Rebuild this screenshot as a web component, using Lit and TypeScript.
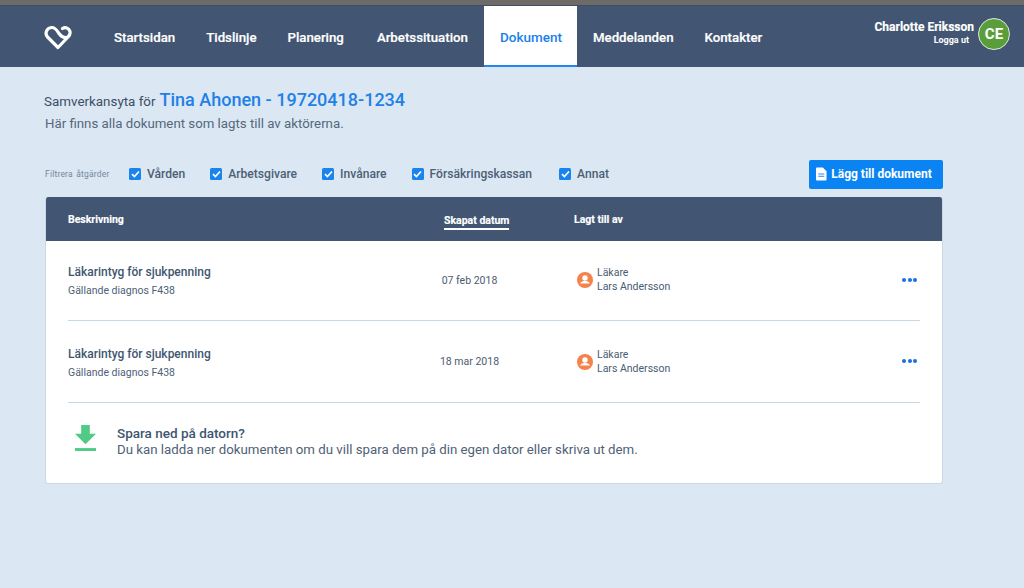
import { LitElement, html, css, svg } from "lit";
import { customElement } from "lit/decorators.js";

const NAV = ["Startsidan", "Tidslinje", "Planering", "Arbetssituation", "Dokument", "Meddelanden", "Kontakter"];
const FILTERS = ["Vården", "Arbetsgivare", "Invånare", "Försäkringskassan", "Annat"];
const ROWS = [
  { title: "Läkarintyg för sjukpenning", sub: "Gällande diagnos F438", date: "07 feb 2018" },
  { title: "Läkarintyg för sjukpenning", sub: "Gällande diagnos F438", date: "18 mar 2018" },
];

@customElement("app-root")
export class AppRoot extends LitElement {
  static styles = css`
    :host { display: block; width: 1024px; height: 588px; overflow: hidden; background: #dbe7f3; font-family: Roboto, "Liberation Sans", sans-serif; color: #41566f; }
    .strip { height: 5px; background: #6d6a68; border-bottom: 1px solid #3d4f68; }
    nav { height: 61px; background: #425673; display: flex; align-items: stretch; padding: 0 14px 0 44px; }
    .logo { width: 28px; margin-right: 26.500px; align-self: center; display: flex; margin-top: 2px; }
    .links { display: flex; align-items: stretch; }
    .links a { padding: 1px 15.500px 0; display: flex; align-items: center; color: #fff; font-size: 13.250px; font-weight: 500; box-sizing: border-box; -webkit-text-stroke: 0.2px #fff; }
    .links a:nth-child(4) { margin-left: 2px; }
    .links a.on { background: #fff; color: #1a80e8; border-bottom: 2px solid #2287ee; padding: 3px 0 0; margin-left: 1px; -webkit-text-stroke: 0; width: 93px; justify-content: center; font-size: 13.500px; }
    .user { margin-left: auto; display: flex; align-items: center; gap: 4px; margin-top: -5px; }
    .who { text-align: right; color: #fff; font-weight: 700; }
    .who b { display: block; font-size: 12px; line-height: 13px; font-weight: 700; -webkit-text-stroke: 0.15px #fff; }
    .who span { display: block; font-size: 9px; line-height: 13px; margin-right: 5px; }
    .avatar { width: 32px; height: 32px; box-sizing: border-box; border-radius: 50%; background: #5a9e3a; border: 1px solid #dfe8e0; display: flex; align-items: center; justify-content: center; color: #fff; font-size: 15px; font-weight: 700; }
    main { padding: 0 81px 0 45px; }
    .head { padding-top: 22px; }
    .l1 { font-size: 13.400px; line-height: 22px; color: #3c4f66; display: flex; align-items: baseline; gap: 4px; margin-left: -1px; }
    .l1 strong { font-size: 18px; font-weight: 500; color: #1f80e6; }
    .l2 { font-size: 13.250px; line-height: 18px; color: #55677c; margin-top: 2px; }
    .bar { display: flex; align-items: center; margin-top: 27px; height: 29px; }
    .bar small { font-size: 8.500px; color: #75879a; width: 84px; letter-spacing: 0.2px; word-spacing: 1px; margin-top: -1px; }
    .f { display: flex; align-items: center; gap: 6px; font-size: 12.100px; font-weight: 500; color: #4c5f76; margin-right: 25px; margin-top: -2px; }
    .f:nth-of-type(4) { margin-right: 27px; }
    .f i { width: 12px; height: 12px; border-radius: 1.500px; background: #1a84ee; display: flex; align-items: center; justify-content: center; }
    .btn { margin-left: auto; height: 29px; width: 134px; border-radius: 2px; background: #0a84f2; color: #fff; font-size: 12px; font-weight: 700; display: flex; align-items: center; justify-content: center; gap: 4px; box-sizing: border-box; padding: 0 4px 2px 0; }
    .card { margin-top: 8px; background: #fff; border-radius: 3px; border: 1px solid #c9d8e6; border-top: 0; overflow: hidden; height: 287px; box-sizing: border-box; }
    .thead { height: 44px; margin: 0 -1px; background: #425673; color: #fff; font-size: 10.500px; font-weight: 700; display: grid; grid-template-columns: 376px 130px 1fr; align-items: center; padding-left: 23px; -webkit-text-stroke: 0.15px #fff; }
    .thead span.sort { justify-self: start; border-bottom: 2px solid #fff; line-height: 15px; padding-top: 2px; margin-top: 2px; }
    .rows { padding: 0 22px; }
    .row { height: 78px; border-bottom: 1px solid #c5d8e6; display: grid; grid-template-columns: 361px 148px 1fr 20px; align-items: center; padding-bottom: 1px; }
    .row + .row { height: 81px; padding-bottom: 0; }
    .row + .row .p { margin-top: 1px; }
    .desc { margin-top: 2px; }
    .t { font-size: 12px; font-weight: 500; line-height: 16px; color: #41566f; }
    .s { font-size: 10.500px; line-height: 14px; margin-top: 4px; color: #4d6076; }
    .d { font-size: 10.500px; text-align: center; color: #4a5c72; width: 61px; margin-left: 10px; white-space: nowrap; }
    .p { display: flex; align-items: center; gap: 4px; font-size: 10.500px; line-height: 14px; color: #4a5c72; margin-top: -1px; }
    .dots { display: flex; gap: 1.500px; justify-self: end; margin-right: 3px; margin-top: -1px; }
    .dots b { width: 4px; height: 4px; border-radius: 50%; background: #1b6fe0; }
    .save { display: flex; align-items: center; padding: 22px 0 0 28px; }
    .save svg { margin: 0 20px 6px 0; }
    .save h4 { margin: 0 0 2px; font-size: 13.500px; font-weight: 500; line-height: 14px; color: #3e5570; }
    .save p { margin: 0; font-size: 13.250px; line-height: 16px; color: #4f6176; }
  `;

  render() {
    const chk = svg`<svg width="9" height="8" viewBox="0 0 9 8"><path d="M1 4.200 3.400 6.500 8 1.500" fill="none" stroke="#fff" stroke-width="1.700"/></svg>`;
    return html`
      <div class="strip"></div>
      <nav>
        <div class="logo">
          <svg width="28" height="25" viewBox="0 0 28 25"><path d="M18.500 3.500C21 1.800 25 2.800 26 6.500 26.600 9 25 11 24 12L14 22.500 3.500 12C.8 9 2 3 7.500 2.500 11.500 2.200 13 5.500 15 8.500 17 11.500 20.500 13.500 24 12" fill="none" stroke="#fff" stroke-width="3.200" stroke-linejoin="round" stroke-linecap="round"/></svg>
        </div>
        <div class="links">
          ${NAV.map((n) => html`<a class=${n === "Dokument" ? "on" : ""}>${n}</a>`)}
        </div>
        <div class="user">
          <div class="who"><b>Charlotte Eriksson</b><span>Logga ut</span></div>
          <div class="avatar">CE</div>
        </div>
      </nav>
      <main>
        <div class="head">
          <div class="l1">Samverkansyta för <strong>Tina Ahonen - 19720418-1234</strong></div>
          <div class="l2">Här finns alla dokument som lagts till av aktörerna.</div>
        </div>
        <div class="bar">
          <small>Filtrera åtgärder</small>
          ${FILTERS.map((f) => html`<label class="f"><i>${chk}</i>${f}</label>`)}
          <div class="btn">
            <svg width="11" height="14" viewBox="0 0 12 14"><path d="M1 0h6.500L11.500 4v9a1 1 0 0 1-1 1H1a1 1 0 0 1-1-1V1a1 1 0 0 1 1-1z" fill="#fff"/><path d="M2.500 7h6.500M2.500 9.500h6.500" stroke="#0a84f2" stroke-width="1"/></svg>
            Lägg till dokument
          </div>
        </div>
        <div class="card">
          <div class="thead"><span>Beskrivning</span><span class="sort">Skapat datum</span><span>Lagt till av</span></div>
          <div class="rows">
            ${ROWS.map((r) => html`
              <div class="row">
                <div class="desc"><div class="t">${r.title}</div><div class="s">${r.sub}</div></div>
                <div class="d">${r.date}</div>
                <div class="p">
                  <svg width="16" height="16" viewBox="0 0 16 16"><circle cx="8" cy="8" r="8" fill="#f5824b"/><circle cx="8" cy="6" r="2.700" fill="#fff"/><path d="M3 11.500c1-2 3-2.500 5-2.500s4 .5 5 2.500z" fill="#fff"/></svg>
                  <div>Läkare<br />Lars Andersson</div>
                </div>
                <div class="dots"><b></b><b></b><b></b></div>
              </div>
            `)}
          </div>
          <div class="save">
            <svg width="23" height="27" viewBox="0 0 24 28"><path d="M7.500 0h9v9H23L12 20 1 9h6.500z" fill="#4fcb86"/><rect x="1" y="24" width="22" height="3" fill="#4fcb86"/></svg>
            <div><h4>Spara ned på datorn?</h4><p>Du kan ladda ner dokumenten om du vill spara dem på din egen dator eller skriva ut dem.</p></div>
          </div>
        </div>
      </main>
    `;
  }
}
